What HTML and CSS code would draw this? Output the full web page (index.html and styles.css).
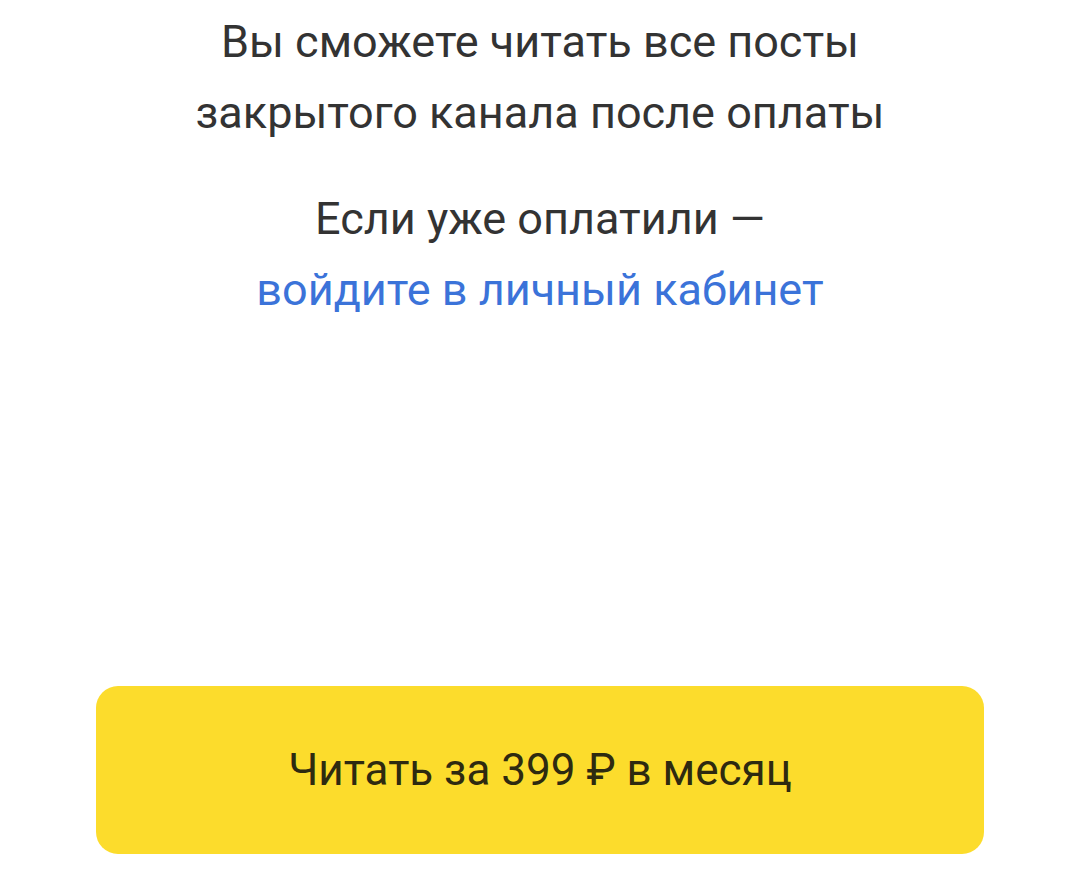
FILE: index.html
```html
<!DOCTYPE html>
<html>
<head>
    <title>Закрытый канал</title>
    <link rel="stylesheet" href="styles.css">
</head>
<body>
    <div class="paywall">
        <p class="lead">Вы сможете читать все посты<br>закрытого канала после оплаты</p>
        <p class="lead login">Если уже оплатили —<br><a href="#" class="link">войдите в личный кабинет</a></p>
    </div>
    <div class="actions">
        <button class="pay-btn">Читать за 399 ₽ в месяц</button>
    </div>
</body>
</html>
```

FILE: styles.css
```css
body {
    font-family: Roboto, "Noto Sans", Arial, sans-serif;
    margin: 0;
    background: #fff;
    color: #333;
    height: 882px;
    display: flex;
    flex-direction: column;
}
.paywall {
    flex: 1;
    text-align: center;
    padding-top: 6px;
}
.lead {
    font-size: 45px;
    line-height: 71px;
    margin: 0 0 35px;
}
.link {
    color: #3b73d9;
    text-decoration: none;
}
.actions {
    padding: 0 96px 28px;
}
.pay-btn {
    width: 100%;
    height: 168px;
    border: none;
    border-radius: 22px;
    background-color: #fcdc2c;
    color: #2e2a10;
    font-family: Roboto, "Noto Sans", Arial, sans-serif;
    font-size: 44px;
    cursor: pointer;
}
```
